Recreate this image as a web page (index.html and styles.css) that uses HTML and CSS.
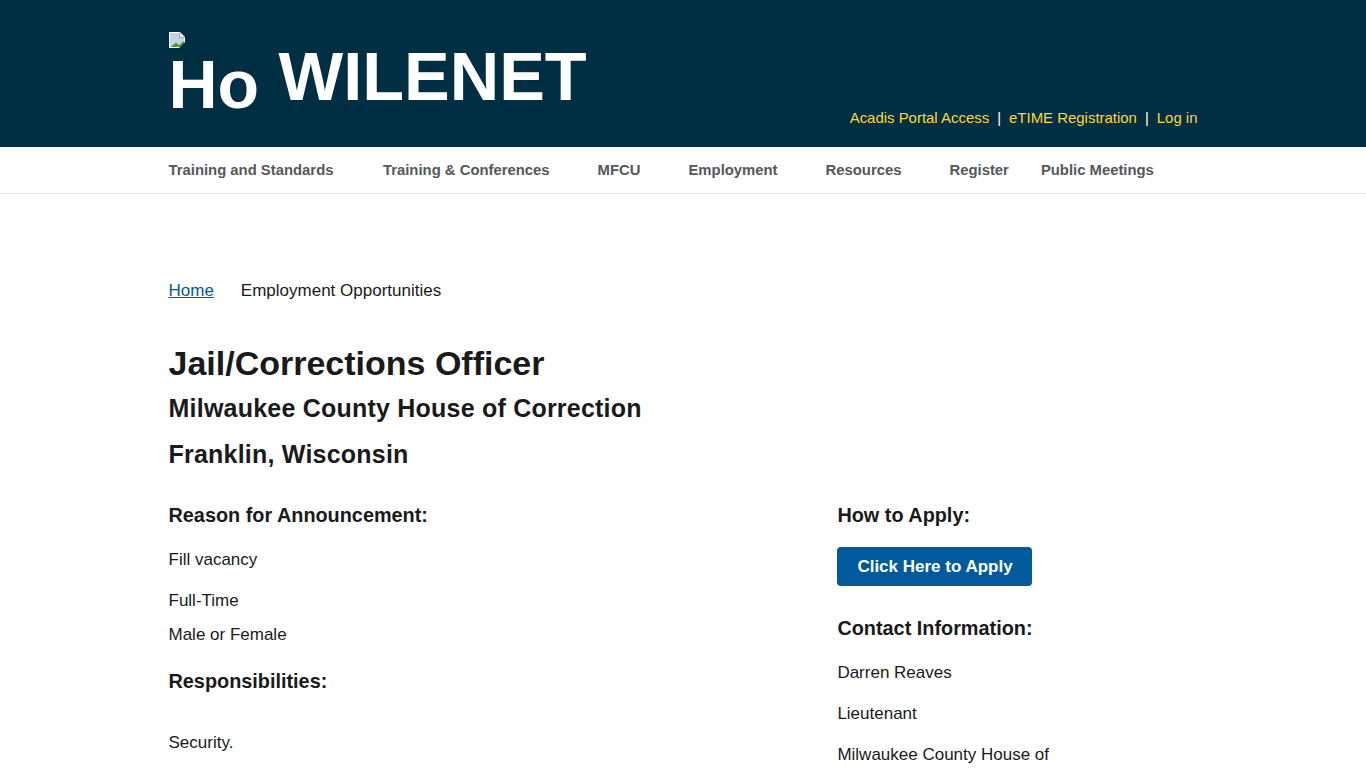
FILE: index.html
```html
<!DOCTYPE html>
<html>
  <head>
    <title>Jail/Corrections Officer | WILENET</title>
    <link rel="stylesheet" href="styles.css">
  </head>
  <body>
    <header class="site-header">
      <div class="container header-inner">
        <a class="brand" href="#">
          <span class="logo">
            <svg class="broken-img" width="16" height="16" viewBox="0 0 16 16">
              <path d="M0 0H11L16 5V16H0Z" fill="#fff"/>
              <path d="M1 1H10.5V5.5H15V9L10 13L7 11L1 14Z" fill="#c6d3e6"/>
              <path d="M10.5 0.5V5.5H15.5" fill="#e8e8e8" stroke="#a8a8a8"/>
              <path d="M1 15L7 10.5L10 13L15 9V12L11 15Z" fill="#4a9e3a"/>
              <path d="M10 16L16 10V16Z" fill="#002e43"/>
            </svg>
            <span class="logo-alt">Ho</span>
          </span>
          <span class="site-name">WILENET</span>
        </a>
        <nav class="secondary-menu">
          <a href="#">Acadis Portal Access</a>
          <span class="sep">|</span>
          <a href="#">eTIME Registration</a>
          <span class="sep">|</span>
          <a href="#">Log in</a>
        </nav>
      </div>
    </header>
    <nav class="main-menu">
      <div class="container menu-inner">
        <a href="#">Training and Standards</a>
        <a href="#">Training &amp; Conferences</a>
        <a href="#">MFCU</a>
        <a href="#">Employment</a>
        <a href="#">Resources</a>
        <a href="#">Register</a>
        <a href="#">Public Meetings</a>
      </div>
    </nav>
    <main class="container content">
      <div class="breadcrumb">
        <a href="#">Home</a>
        <span>Employment Opportunities</span>
      </div>
      <h1>Jail/Corrections Officer</h1>
      <h2>Milwaukee County House of Correction</h2>
      <h2>Franklin, Wisconsin</h2>
      <div class="columns">
        <div class="col-main">
          <h3>Reason for Announcement:</h3>
          <p>Fill vacancy</p>
          <p class="tight">Full-Time</p>
          <p class="tight">Male or Female</p>
          <h3 class="resp">Responsibilities:</h3>
          <p class="security">Security.</p>
        </div>
        <aside class="col-side">
          <h3 class="apply">How to Apply:</h3>
          <a class="btn" href="#">Click Here to Apply</a>
          <h3 class="contact">Contact Information:</h3>
          <p>Darren Reaves</p>
          <p>Lieutenant</p>
          <p>Milwaukee County House of</p>
        </aside>
      </div>
    </main>
  </body>
</html>
```

FILE: styles.css
```css
html, body{
    height: 768px;
    overflow: hidden;
}
body{
    margin: 0;
    font-family: "Liberation Sans", Arial, sans-serif;
    font-size: 17px;
    line-height: 24px;
    color: #1a1a1a;
    background: #fff;
}
a{
    color: #005a9c;
}
.container{
    width: 1029px;
    margin: 0 auto;
    box-sizing: border-box;
}
.site-header{
    background: #002e43;
    height: 147px;
}
.header-inner{
    display: flex;
    justify-content: space-between;
    height: 147px;
}
.brand{
    display: flex;
    color: #fff;
    text-decoration: none;
    font-weight: bold;
    font-size: 68.5px;
    line-height: 78px;
    padding-top: 32px;
}
.logo{
    display: block;
    width: 90px;
    margin-right: 20px;
}
.broken-img{
    display: block;
}
.logo-alt{
    display: block;
    margin-top: -3px;
    font-size: 68px;
}
.site-name{
    display: block;
    margin-top: 6px;
}
.secondary-menu{
    align-self: flex-end;
    display: flex;
    gap: 8px;
    font-size: 14.95px;
    line-height: 20px;
    padding-bottom: 19px;
    color: #fff;
}
.secondary-menu a{
    color: #fdd835;
    text-decoration: none;
}
.main-menu{
    height: 46px;
    border-bottom: 1px solid #e4e4e4;
}
.menu-inner{
    display: flex;
    height: 46px;
    align-items: center;
}
.menu-inner a{
    font-size: 14.85px;
    font-weight: bold;
    white-space: nowrap;
    color: #54585a;
    text-decoration: none;
    margin-right: 48px;
}
.menu-inner a:first-child{
    margin-right: 49.5px;
}
.menu-inner a:nth-child(6){
    margin-right: 32px;
}
.content{
    padding-top: 85px;
}
.breadcrumb{
    display: flex;
    gap: 27px;
    line-height: 24px;
    margin-bottom: 40px;
}
h1{
    font-size: 34px;
    line-height: 40px;
    margin: 0 0 9px;
}
h2{
    font-size: 25px;
    line-height: 32px;
    letter-spacing: 0.22px;
    margin: 0 0 14px;
}
.columns{
    display: flex;
    margin-top: 33px;
}
.col-main{
    width: 668.9px;
}
.col-side{
    flex: 1;
}
h3{
    font-size: 19.85px;
    line-height: 24px;
    margin: 0 0 21px;
}
p{
    margin: 0 0 17px;
}
p.tight{
    margin-bottom: 10px;
}
h3.resp{
    margin-top: 22px;
    margin-bottom: 38px;
}
h3.apply{
    margin-bottom: 20px;
}
.btn{
    display: inline-block;
    background: #005a9c;
    color: #fff;
    font-weight: bold;
    text-decoration: none;
    line-height: 39px;
    padding: 0 19.5px 0 20px;
    border-radius: 4px;
}
h3.contact{
    margin-top: 30px;
}
```
